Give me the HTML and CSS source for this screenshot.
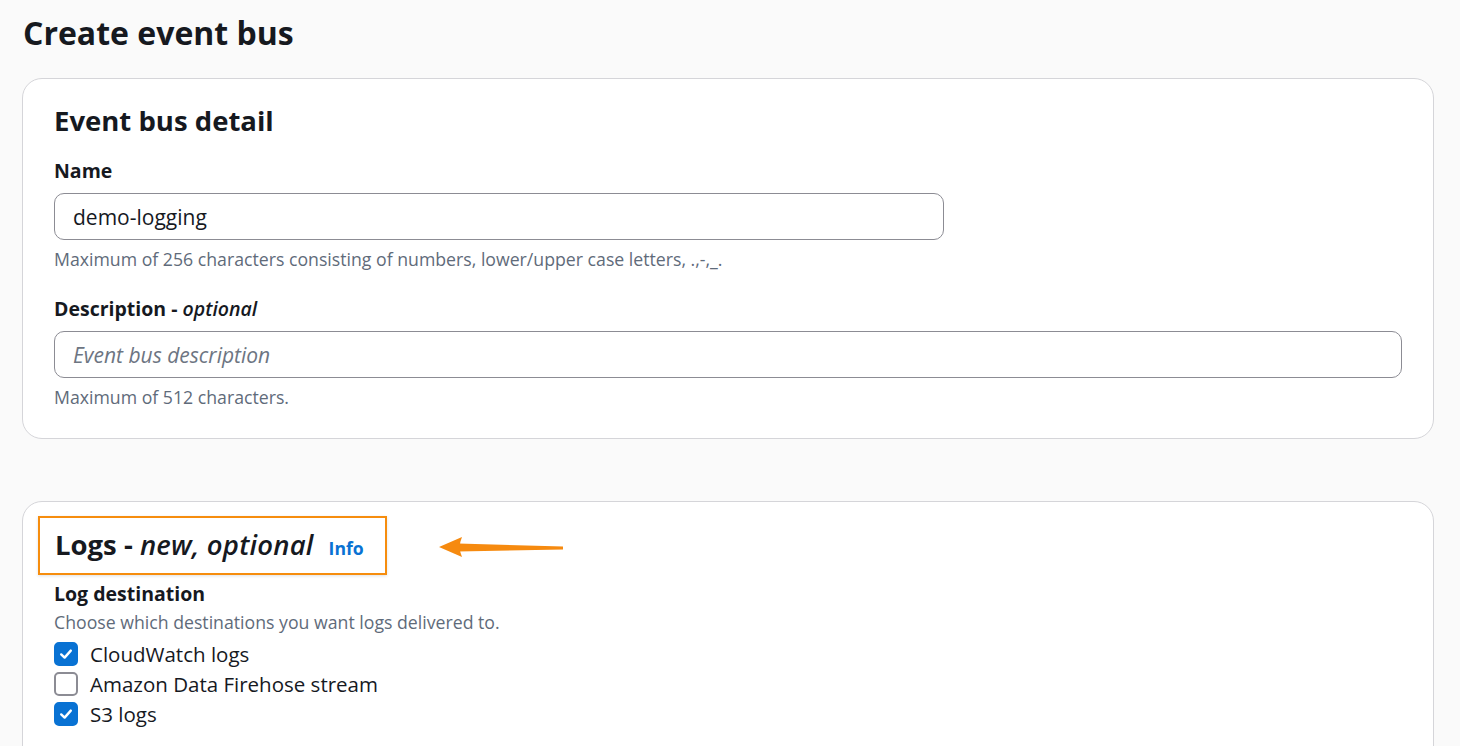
FILE: index.html
```html
<!DOCTYPE html>
<html lang="en">
<head>
    <meta charset="UTF-8">
    <title>Create event bus</title>
    <link rel="stylesheet" href="styles.css">
</head>
<body>
    <div class="page">
        <h1 class="page-title">Create event bus</h1>

        <div class="card">
            <h2 class="card-title">Event bus detail</h2>

            <div class="field">
                <label class="field-label" for="busName">Name</label>
                <input class="text-input name-input" id="busName" type="text" value="demo-logging">
                <div class="hint">Maximum of 256 characters consisting of numbers, lower/upper case letters, .,-,_.</div>
            </div>

            <div class="field">
                <label class="field-label" for="busDesc">Description - <i>optional</i></label>
                <input class="text-input" id="busDesc" type="text" placeholder="Event bus description">
                <div class="hint">Maximum of 512 characters.</div>
            </div>
        </div>

        <div class="card card-logs">
            <div class="highlight">
                <h2 class="card-title">Logs - <i>new, optional</i></h2>
                <a class="info-link" href="#">Info</a>
            </div>

            <!-- annotation arrow -->
            <svg class="callout-arrow" width="130" height="26" viewBox="0 0 130 26">
                <path d="M22 9.5 L127 12.5 L127 15.5 L22 17.5 Z" fill="#f68a0f"/>
                <path d="M3 13 L26 3 Q21.5 13 26 23 Z" fill="#f68a0f"/>
            </svg>

            <div class="field">
                <div class="field-label">Log destination</div>
                <div class="hint hint-top">Choose which destinations you want logs delivered to.</div>
                <div class="checks">
                    <label class="check-row">
                        <span class="box checked">
                            <svg width="16" height="16" viewBox="0 0 16 16"><path d="M3.2 8.4 L6.6 11.6 L12.8 4.6" stroke="#fff" stroke-width="2.4" fill="none" stroke-linecap="round" stroke-linejoin="round"/></svg>
                        </span>
                        CloudWatch logs
                    </label>
                    <label class="check-row">
                        <span class="box"></span>
                        Amazon Data Firehose stream
                    </label>
                    <label class="check-row">
                        <span class="box checked">
                            <svg width="16" height="16" viewBox="0 0 16 16"><path d="M3.2 8.4 L6.6 11.6 L12.8 4.6" stroke="#fff" stroke-width="2.4" fill="none" stroke-linecap="round" stroke-linejoin="round"/></svg>
                        </span>
                        S3 logs
                    </label>
                </div>
            </div>
        </div>
    </div>
</body>
</html>
```

FILE: styles.css
```css
:root {
    --text: #16191f;
    --muted: #5f6b7a;
    --border: #8c8c94;
    --blue: #0972d3;
    --orange: #f68d0e;
    --page-bg: #fafafa;
}

* {
    margin: 0;
    padding: 0;
    box-sizing: border-box;
}

body {
    font-family: 'Open Sans', 'Noto Sans', sans-serif;
    background: var(--page-bg);
    color: var(--text);
    height: 746px;
    overflow: hidden;
}

.page {
    padding: 12px 26px 0 22px;
}

.page-title {
    font-size: 32px;
    font-weight: 700;
    line-height: 42px;
    padding-left: 1px;
    margin-bottom: 24px;
}

.card {
    background: #fff;
    border: 1px solid #d5d5d9;
    border-radius: 20px;
    padding: 23px 31px 29px 31px;
    margin-bottom: 62px;
    position: relative;
}

.card-title {
    font-size: 27.5px;
    font-weight: 700;
    line-height: 38px;
    margin-bottom: 18px;
}

.card-title i {
    font-weight: 600;
    letter-spacing: 0.2px;
}

.field {
    margin-bottom: 25px;
}

.field:last-child {
    margin-bottom: 0;
}

.field-label {
    display: block;
    font-size: 19.5px;
    font-weight: 700;
    line-height: 26px;
    margin-bottom: 9px;
}

.field-label i {
    font-weight: 600;
}

.text-input {
    display: block;
    width: 100%;
    height: 47px;
    border: 1px solid var(--border);
    border-radius: 10px;
    padding: 0 18px;
    font-family: inherit;
    font-size: 21px;
    color: var(--text);
    outline: none;
}

.text-input::placeholder {
    color: #6d7582;
    font-style: italic;
}

.name-input {
    width: 890px;
}

.hint {
    font-size: 17.7px;
    line-height: 24px;
    color: var(--muted);
    margin-top: 7px;
}

.hint-top {
    margin-top: -6px;
}

.card-logs {
    padding-top: 14px;
    min-height: 300px;
}

.highlight {
    display: inline-flex;
    align-items: baseline;
    gap: 15px;
    border: 2px solid var(--orange);
    padding: 8px 21px 9px 15px;
    margin-left: -16px;
    margin-bottom: 6px;
    box-shadow: 0 1px 3px rgba(0, 0, 0, 0.12);
}

.highlight .card-title {
    margin-bottom: 0;
}

.info-link {
    font-size: 17.6px;
    font-weight: 700;
    color: var(--blue);
    text-decoration: none;
}

.callout-arrow {
    position: absolute;
    left: 413px;
    top: 32px;
}

.checks {
    display: flex;
    flex-direction: column;
    gap: 6px;
    margin-top: 8px;
}

.check-row {
    display: flex;
    align-items: center;
    gap: 12px;
    font-size: 20.5px;
    line-height: 24px;
}

.box {
    width: 24px;
    height: 24px;
    border: 2px solid var(--border);
    border-radius: 5px;
    background: #fff;
    display: flex;
    align-items: center;
    justify-content: center;
    flex-shrink: 0;
}

.box.checked {
    background: var(--blue);
    border-color: var(--blue);
}
```
